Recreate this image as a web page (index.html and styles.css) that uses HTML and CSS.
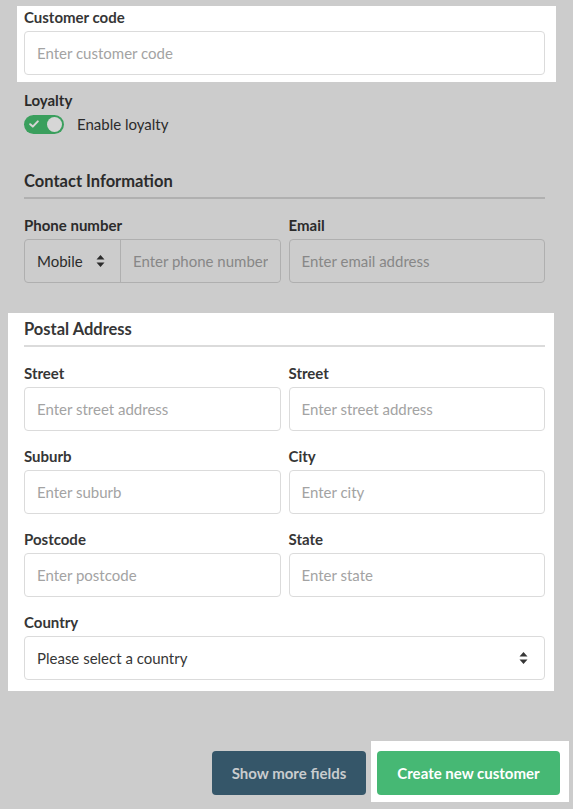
FILE: index.html
```html
<!DOCTYPE html>
<html lang="en">
<head>
<meta charset="utf-8">
<title>New customer</title>
<link rel="stylesheet" href="styles.css">
</head>
<body>
<form class="page">
  <div class="spot spot-code">
    <div class="field">
      <label class="label">Customer code</label>
      <input class="input" type="text" placeholder="Enter customer code">
    </div>
  </div>

  <div class="field dim loyalty">
    <label class="label">Loyalty</label>
    <div class="switch-row">
      <span class="switch">
        <svg class="check" width="10" height="8" viewBox="0 0 10 8"><path d="M1.2 4.2 L3.8 6.6 L8.8 1.4" fill="none" stroke="#d6d6d6" stroke-width="2" stroke-linecap="round" stroke-linejoin="round"/></svg>
        <span class="knob"></span>
      </span>
      <span class="switch-text">Enable loyalty</span>
    </div>
  </div>

  <h3 class="heading dim">Contact Information</h3>
  <div class="grid dim">
    <div class="field">
      <label class="label">Phone number</label>
      <div class="addon">
        <div class="select phone-type">
          <span>Mobile</span>
          <svg width="9" height="14" viewBox="0 0 9 14"><path d="M4.5 1 L8.5 5.5 L0.5 5.5 Z M4.5 13 L8.5 8.5 L0.5 8.5 Z" fill="#2b2b2b"/></svg>
        </div>
        <input class="input phone" type="tel" placeholder="Enter phone number">
      </div>
    </div>
    <div class="field">
      <label class="label">Email</label>
      <input class="input" type="email" placeholder="Enter email address">
    </div>
  </div>

  <div class="spot spot-postal">
    <h3 class="heading">Postal Address</h3>
    <div class="grid">
      <div class="field">
        <label class="label">Street</label>
        <input class="input" type="text" placeholder="Enter street address">
      </div>
      <div class="field">
        <label class="label">Street</label>
        <input class="input" type="text" placeholder="Enter street address">
      </div>
      <div class="field">
        <label class="label">Suburb</label>
        <input class="input" type="text" placeholder="Enter suburb">
      </div>
      <div class="field">
        <label class="label">City</label>
        <input class="input" type="text" placeholder="Enter city">
      </div>
      <div class="field">
        <label class="label">Postcode</label>
        <input class="input" type="text" placeholder="Enter postcode">
      </div>
      <div class="field">
        <label class="label">State</label>
        <input class="input" type="text" placeholder="Enter state">
      </div>
    </div>
    <div class="field last">
      <label class="label">Country</label>
      <div class="select country">
        <span>Please select a country</span>
        <svg width="9" height="14" viewBox="0 0 9 14"><path d="M4.5 1 L8.5 5.5 L0.5 5.5 Z M4.5 13 L8.5 8.5 L0.5 8.5 Z" fill="#363636"/></svg>
      </div>
    </div>
  </div>

  <div class="footer">
    <button type="button" class="btn btn-more">Show more fields</button>
    <div class="spot spot-btn">
      <button type="button" class="btn btn-create">Create new customer</button>
    </div>
  </div>
</form>
</body>
</html>
```

FILE: styles.css
```css
* { box-sizing: border-box; }
html, body { margin: 0; padding: 0; }
body {
  background: #cccccc;
  font-family: Lato, "Noto Sans", sans-serif;
  color: #363636;
  font-size: 15px;
}
.page {
  padding: 0 28px 0 24px;
  display: flex;
  flex-direction: column;
}
.spot { background: #ffffff; }
.spot-code {
  margin: 6px -11px 0 -7px;
  padding: 1px 11px 7px 7px;
}
.spot-postal {
  margin: 30px -9px 0 -16px;
  padding: 5px 9px 11px 16px;
}
.field { display: flex; flex-direction: column; }
.label {
  font-weight: 700;
  font-size: 15px;
  line-height: 20px;
  margin-bottom: 4px;
  color: #363636;
}
.dim .label { color: #2b2b2b; }
.input {
  height: 44px;
  width: 100%;
  border: 1px solid #dbdbdb;
  border-radius: 4px;
  background: #ffffff;
  padding: 0 12px;
  font-family: inherit;
  font-size: 15px;
  color: #363636;
  outline: none;
}
.input::placeholder { color: #a3a3a3; opacity: 1; }
.dim .input {
  background: #cccccc;
  border-color: #afafaf;
}
.dim .input::placeholder { color: #878787; }

.loyalty { margin-top: 8px; }
.switch-row {
  display: flex;
  align-items: center;
  height: 20px;
}
.switch {
  width: 40px;
  height: 19px;
  border-radius: 10px;
  background: #3a9f5d;
  display: flex;
  align-items: center;
  justify-content: space-between;
  padding: 0 2px 0 5px;
  margin-right: 13px;
}
.check { display: block; }
.knob {
  width: 15px;
  height: 15px;
  border-radius: 50%;
  background: #d6d6d6;
}
.switch-text { color: #2b2b2b; font-size: 15px; }

.heading {
  margin: 0;
  font-size: 16.5px;
  line-height: 22px;
  font-weight: 700;
  padding-bottom: 5px;
  border-bottom: 2px solid #dbdbdb;
  margin-bottom: 16px;
  color: #363636;
}
.heading.dim {
  margin-top: 36px;
  color: #2b2b2b;
  border-bottom-color: #b0b0b0;
}
.grid {
  display: grid;
  grid-template-columns: 1fr 1fr;
  column-gap: 8px;
  row-gap: 15px;
}
.spot-postal .grid { margin-bottom: 15px; }

.addon {
  display: flex;
  height: 44px;
  border: 1px solid #afafaf;
  border-radius: 4px;
}
.addon .input.phone {
  border: none;
  border-left: 1px solid #afafaf;
  border-radius: 0 4px 4px 0;
  height: 42px;
  flex: 1;
  min-width: 0;
}
.select {
  display: flex;
  align-items: center;
  justify-content: space-between;
  font-size: 15px;
}
.phone-type {
  width: 95px;
  padding: 0 15px 0 12px;
  color: #2b2b2b;
}
.country {
  height: 44px;
  border: 1px solid #dbdbdb;
  border-radius: 4px;
  padding: 0 16px 0 12px;
  color: #363636;
}

.footer {
  display: flex;
  justify-content: flex-end;
  align-items: flex-start;
  margin: 50px -24px 0 0;
  gap: 5px;
}
.spot-btn { padding: 10px 9px 7px 6px; }
.btn {
  height: 44px;
  border: none;
  border-radius: 4px;
  font-family: inherit;
  font-size: 15px;
  font-weight: 700;
  cursor: pointer;
}
.btn-more {
  margin-top: 10px;
  width: 154px;
  background: #355669;
  color: #c9ccce;
}
.btn-create {
  width: 183px;
  background: #46b874;
  color: #ffffff;
}
```
